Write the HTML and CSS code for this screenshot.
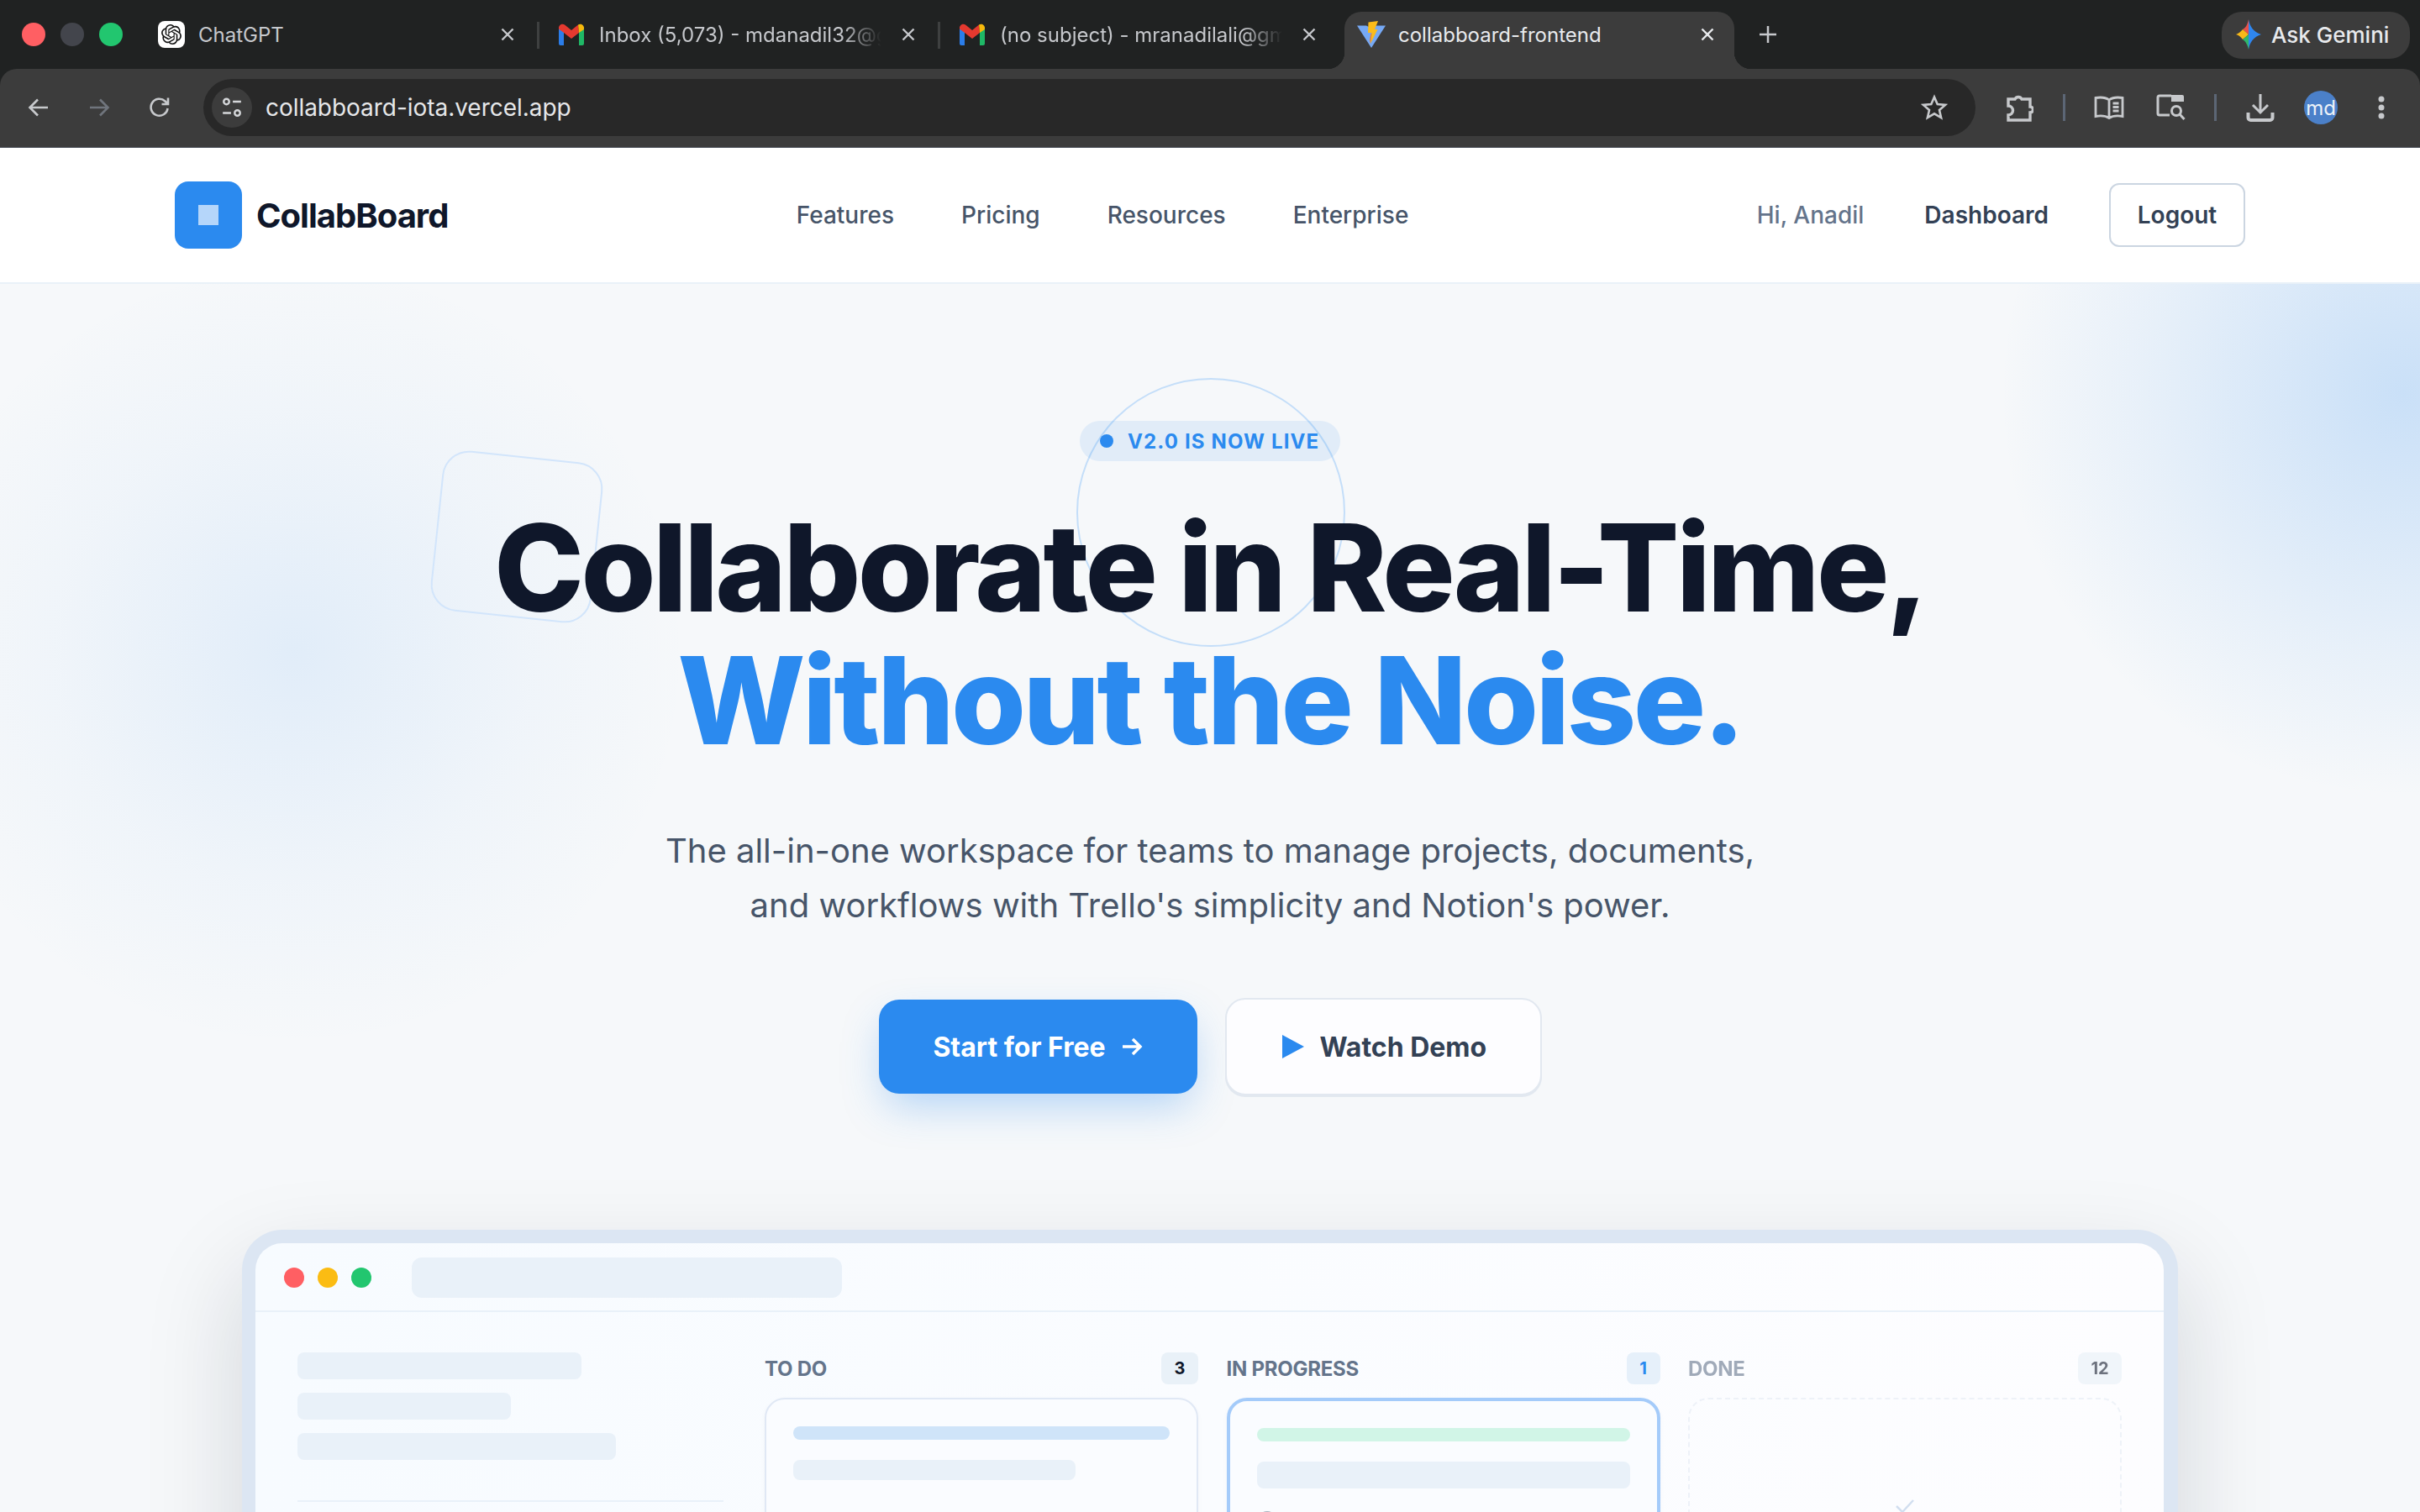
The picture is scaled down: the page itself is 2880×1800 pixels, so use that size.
FILE: index.html
```html
<!DOCTYPE html>
<html lang="en">
<head>
<meta charset="utf-8">
<title>collabboard-frontend</title>
<link rel="stylesheet" href="styles.css">
</head>
<body>
<div class="browser">
  <div class="tabstrip">
    <div class="lights"><i class="light red"></i><i class="light grey"></i><i class="light green"></i></div>
    <div class="tab sep">
      <span class="fav-gpt"><svg viewBox="0 0 24 24" width="24" height="24"><path fill="#111" d="M22.2819 9.8211a5.9847 5.9847 0 0 0-.5157-4.9108 6.0462 6.0462 0 0 0-6.5098-2.9A6.0651 6.0651 0 0 0 4.9807 4.1818a5.9847 5.9847 0 0 0-3.9977 2.9 6.0462 6.0462 0 0 0 .7427 7.0966 5.98 5.98 0 0 0 .511 4.9107 6.051 6.051 0 0 0 6.5146 2.9001A5.9847 5.9847 0 0 0 13.2599 24a6.0557 6.0557 0 0 0 5.7718-4.2058 5.9894 5.9894 0 0 0 3.9977-2.9001 6.0557 6.0557 0 0 0-.7475-7.0729zm-9.022 12.6081a4.4755 4.4755 0 0 1-2.8764-1.0408l.1419-.0804 4.7783-2.7582a.7948.7948 0 0 0 .3927-.6813v-6.7369l2.02 1.1686a.071.071 0 0 1 .038.052v5.5826a4.504 4.504 0 0 1-4.4945 4.4944zm-9.6607-4.1254a4.4708 4.4708 0 0 1-.5346-3.0137l.142.0852 4.783 2.7582a.7712.7712 0 0 0 .7806 0l5.8428-3.3685v2.3324a.0804.0804 0 0 1-.0332.0615L9.74 19.9502a4.4992 4.4992 0 0 1-6.1408-1.6464zM2.3408 7.8956a4.485 4.485 0 0 1 2.3655-1.9728V11.6a.7664.7664 0 0 0 .3879.6765l5.8144 3.3543-2.0201 1.1685a.0757.0757 0 0 1-.071 0l-4.8303-2.7865A4.504 4.504 0 0 1 2.3408 7.872zm16.5963 3.8558L13.1038 8.364 15.1192 7.2a.0757.0757 0 0 1 .071 0l4.8303 2.7913a4.4944 4.4944 0 0 1-.6765 8.1042v-5.6772a.79.79 0 0 0-.407-.667zm2.0107-3.0231l-.142-.0852-4.7735-2.7818a.7759.7759 0 0 0-.7854 0L9.409 9.2297V6.8974a.0662.0662 0 0 1 .0284-.0615l4.8303-2.7866a4.4992 4.4992 0 0 1 6.6802 4.66zM8.3065 12.863l-2.02-1.1638a.0804.0804 0 0 1-.038-.0567V6.0742a4.4992 4.4992 0 0 1 7.3757-3.4537l-.142.0805L8.704 5.459a.7948.7948 0 0 0-.3927.6813zm1.0976-2.3654l2.602-1.4998 2.6069 1.4998v2.9994l-2.5974 1.4997-2.6067-1.4997Z"/></svg></span>
      <span class="tab-title">ChatGPT</span>
      <svg class="close" viewBox="0 0 16 16" width="16" height="16"><path d="M1.5 1.5l13 13M14.5 1.5l-13 13"/></svg>
    </div>
    <div class="tab sep">
      <svg class="fav" viewBox="0 0 30 28" width="30" height="28"><path fill="#2b7de9" d="M0 5h6v22H2a2 2 0 0 1-2-2z"/><path fill="#1fb866" d="M24 5h6v20a2 2 0 0 1-2 2h-4z"/><path fill="#e5392f" d="M0 6.500C0 2 4.500 .5 7 2.500L15 9l8-6.500L24 12l-9 7-9-7-6-4.500z"/><path fill="#f6b80c" d="M23 2.500C25.500 .5 30 2 30 6.500V8l-6 4z"/></svg>
      <span class="tab-title fade">Inbox (5,073) - mdanadil32@gmail.com</span>
      <svg class="close" viewBox="0 0 16 16" width="16" height="16"><path d="M1.5 1.5l13 13M14.5 1.500l-13 13"/></svg>
    </div>
    <div class="tab">
      <svg class="fav" viewBox="0 0 30 28" width="30" height="28"><path fill="#2b7de9" d="M0 5h6v22H2a2 2 0 0 1-2-2z"/><path fill="#1fb866" d="M24 5h6v20a2 2 0 0 1-2 2h-4z"/><path fill="#e5392f" d="M0 6.500C0 2 4.500 .5 7 2.500L15 9l8-6.500L24 12l-9 7-9-7-6-4.500z"/><path fill="#f6b80c" d="M23 2.500C25.500 .5 30 2 30 6.500V8l-6 4z"/></svg>
      <span class="tab-title fade">(no subject) - mranadilali@gmail.com</span>
      <svg class="close" viewBox="0 0 16 16" width="16" height="16"><path d="M1.5 1.5l13 13M14.5 1.500l-13 13"/></svg>
    </div>
    <div class="tab active">
      <svg class="fav-vite" viewBox="0 0 34 32" width="34" height="32"><path fill="#76a9f5" d="M0 5.500h11l6 3 6-3h11L17 32z"/><path fill="#fbbc1a" d="M13.500 1.500L25 0l-4 10h3.500L16 27l1.500-13H13z"/><path fill="#ef7f2a" d="M16.500 14l1 1-1.500 12 -1-4z"/></svg>
      <span class="tab-title bright">collabboard-frontend</span>
      <svg class="close bright-x" viewBox="0 0 16 16" width="16" height="16"><path d="M1.5 1.5l13 13M14.500 1.500l-13 13"/></svg>
    </div>
    <svg class="plus" viewBox="0 0 22 22" width="22" height="22"><path d="M11 1v20M1 11h20"/></svg>
    <div class="gemini">
      <svg viewBox="0 0 30 36" width="30" height="36"><path fill="#2f86ee" d="M15 0c1.500 9 6 15 15 18-9 3-13.500 9-15 18z"/><path fill="#e8514a" d="M15 0c-1 5-3 10-7 12l7 6z"/><path fill="#f7b819" d="M8 12C5.500 15 3 17 0 18c3 1 5.500 2.500 8 6l7-6z"/><path fill="#2fb66a" d="M8 24c3.500 2 6 7 7 12V18z"/></svg>
      <span>Ask Gemini</span>
    </div>
  </div>
  <div class="toolbar">
    <svg class="tool back" viewBox="0 0 28 28" width="28" height="28"><path d="M25 14H4M13 4.500L3.500 14l9.500 9.500"/></svg>
    <svg class="tool forward" viewBox="0 0 28 28" width="28" height="28"><path d="M3 14h21M15 4.500l9.500 9.500-9.500 9.500"/></svg>
    <svg class="tool reload" viewBox="0 0 28 28" width="28" height="28"><path d="M23.500 15a10 10 0 1 1-3-8.500l3 3M24 2.500v7.500h-7.500"/></svg>
    <div class="omnibox">
      <span class="site-info"><svg viewBox="0 0 24 24" width="26" height="26"><circle cx="6" cy="5.500" r="3"/><path d="M13 5.500h9M2 18h9"/><circle cx="18" cy="18" r="3"/></svg></span>
      <span class="url">collabboard-iota.vercel.app</span>
      <svg class="star" viewBox="0 0 32 32" width="32" height="32"><path d="M16 3.500l3.700 8.600 9.300.8-7 6.100 2.100 9.100-8.100-4.800-8.100 4.800 2.100-9.100-7-6.100 9.300-.8z"/></svg>
    </div>
    <svg class="tool puzzle" viewBox="0 0 34 34" width="34" height="34"><path d="M4 7h8a4.500 4.500 0 0 1 8 0h10v9a3.500 3.500 0 0 1 0 7v9H4v-6a5.500 5.500 0 0 0 0-11z"/></svg>
    <i class="tool-sep"></i>
    <svg class="tool book" viewBox="0 0 36 28" width="36" height="28"><path d="M18 5C14 2 8 1.500 2 2.500v22c6-1 12-.5 16 2 4-2.500 10-3 16-2v-22C28 1.500 22 2 18 5zm0 0v21M22.500 9h7M22.500 13.500h7M22.500 18h7"/></svg>
    <svg class="tool tabsearch" viewBox="0 0 36 32" width="36" height="32"><path d="M16 25H4a2 2 0 0 1-2-2V4a2 2 0 0 1 2-2h14"/><path class="solid" d="M18 1h13a2 2 0 0 1 2 2v6H18z"/><circle cx="24" cy="20" r="5.500"/><path d="M28 24l5.500 6"/></svg>
    <i class="tool-sep sep-two"></i>
    <svg class="tool download" viewBox="0 0 34 34" width="34" height="34"><path d="M17 1v21M8 14l9 9 9-9"/><path class="tray" d="M2.500 23v6a3 3 0 0 0 3 3h23a3 3 0 0 0 3-3v-6"/></svg>
    <span class="avatar">md</span>
    <svg class="dots" viewBox="0 0 8 28" width="8" height="28"><circle cx="4" cy="4" r="3.500"/><circle cx="4" cy="14" r="3.500"/><circle cx="4" cy="24" r="3.500"/></svg>
  </div>
</div>

<header class="nav">
  <a class="brand"><span class="brand-mark"><i></i></span><span class="brand-name">CollabBoard</span></a>
  <nav class="nav-links"><a>Features</a><a>Pricing</a><a>Resources</a><a>Enterprise</a></nav>
  <div class="nav-right"><span class="hi">Hi, Anadil</span><a class="dash">Dashboard</a><a class="logout">Logout</a></div>
</header>

<main class="hero">
  <i class="deco-square"></i>
  <i class="deco-circle"></i>
  <div class="pill"><i></i><span>V2.0 IS NOW LIVE</span></div>
  <h1>Collaborate in Real-Time,<br><span>Without the Noise.</span></h1>
  <p class="lead">The all-in-one workspace for teams to manage projects, documents,<br>and workflows with Trello's simplicity and Notion's power.</p>
  <div class="cta">
    <a class="btn primary">Start for Free<svg viewBox="0 0 26 26" width="26" height="26"><path d="M2 13h21M14 4l9 9-9 9"/></svg></a>
    <a class="btn secondary"><svg viewBox="0 0 26 28" width="26" height="28"><path d="M0 0l26 14L0 28z"/></svg>Watch Demo</a>
  </div>
  <section class="frame">
    <div class="window">
      <div class="win-bar">
        <i class="wd r"></i><i class="wd y"></i><i class="wd g"></i>
        <i class="win-url"></i>
      </div>
      <div class="win-body">
        <aside class="side">
          <i class="sk s1"></i><i class="sk s2"></i><i class="sk s3"></i>
          <i class="side-rule"></i>
        </aside>
        <div class="board">
          <div class="col">
            <div class="col-head"><span>TO DO</span><b class="count">3</b></div>
            <div class="card">
              <i class="line blue"></i><i class="block w75"></i>
            </div>
          </div>
          <div class="col">
            <div class="col-head"><span>IN PROGRESS</span><b class="count accent">1</b></div>
            <div class="card focus">
              <i class="line mint"></i><i class="block tall"></i><i class="mini"></i>
            </div>
          </div>
          <div class="col done">
            <div class="col-head"><span>DONE</span><b class="count wide">12</b></div>
            <div class="card dashed">
              <svg viewBox="0 0 24 18" width="24" height="18"><path d="M2 9l7 7L22 2"/></svg>
            </div>
          </div>
        </div>
      </div>
    </div>
  </section>
</main>
</body>
</html>
```
FILE: styles.css
```css
* { box-sizing: border-box; }
html, body { margin: 0; height: 100%; }
body { width: 2880px; height: 1800px; overflow: hidden; font-family: Inter, "Liberation Sans", sans-serif; background: #f6f8fa; color: #0f172a; }
i { display: block; font-style: normal; }
a { display: inline-block; }

/* browser chrome */
.browser { height: 176px; background: #202222; }
.tabstrip { height: 82px; display: flex; align-items: flex-start; position: relative; }
.lights { width: 165px; height: 82px; flex: none; display: flex; gap: 18px; padding: 27px 0 0 26px; }
.light { width: 28px; height: 28px; border-radius: 50%; }
.red { background: #ff5f63; }
.grey { background: #43454c; }
.green { background: #22c66f; }
.tab { width: 477px; height: 68px; margin-top: 14px; flex: none; display: flex; align-items: center; padding: 0 30px 14px 23px; position: relative; font-size: 24px; color: #c6c8cc; }
.sep::after { content: ""; position: absolute; right: 0; top: 12px; width: 3px; height: 32px; background: #3e4040; }
.fav-gpt { width: 32px; height: 32px; flex: none; background: #fff; border-radius: 8px; display: flex; align-items: center; justify-content: center; }
.fav { flex: none; }
.tab-title { flex: 1; margin-left: 16px; white-space: nowrap; overflow: hidden; }
.fade { margin-left: 18px; -webkit-mask-image: linear-gradient(90deg, #000 86%, transparent 100%); mask-image: linear-gradient(90deg, #000 86%, transparent 100%); }
.close { flex: none; margin-left: 24px; fill: none; stroke: #c6c8cc; stroke-width: 2.4; }
.tab.active { width: 464px; margin-left: 4px; background: #3c3c3c; border-radius: 20px 20px 0 0; padding: 0 24px 14px 15px; color: #e8eaed; }
.tab.active::before, .tab.active::after { content: ""; position: absolute; bottom: 0; width: 20px; height: 20px; }
.tab.active::before { left: -20px; background: radial-gradient(circle at 0 0, transparent 20px, #3c3c3c 20.5px); }
.tab.active::after { right: -20px; background: radial-gradient(circle at 100% 0, transparent 20px, #3c3c3c 20.5px); }
.fav-vite { flex: none; }
.bright { color: #e8eaed; margin-left: 15px; }
.bright-x { stroke: #e8eaed; }
.plus { flex: none; margin: 30px 0 0 29px; fill: none; stroke: #c6c8cc; stroke-width: 2.5; }
.gemini { position: absolute; right: 12px; top: 14px; width: 224px; height: 56px; border-radius: 24px; background: #3c3c3c; display: flex; align-items: center; gap: 12px; padding: 0 0 2px 17px; font-size: 26px; font-weight: 500; color: #e8eaed; }
.gemini svg { flex: none; }
.toolbar { height: 94px; background: #3c3c3c; border-radius: 20px 20px 0 0; display: flex; align-items: center; padding: 0 0 1px 32px; border-bottom: 1px solid #4a4f58; }
.tool { flex: none; fill: none; stroke: #c7c9cc; stroke-width: 2.6; }
.forward { stroke: #70757d; margin-left: 44px; }
.reload { margin-left: 44px; }
.omnibox { flex: none; width: 2109px; height: 68px; margin-left: 38px; border-radius: 34px; background: #282828; display: flex; align-items: center; padding: 0 33px 0 10px; }
.site-info { width: 48px; height: 48px; flex: none; border-radius: 50%; background: #3c3c3c; display: flex; align-items: center; justify-content: center; }
.site-info svg { fill: none; stroke: #d5d7da; stroke-width: 2.2; }
.url { flex: 1; margin-left: 16px; padding-bottom: 1px; font-size: 28px; letter-spacing: -.04px; color: #e6e7e9; }
.star { flex: none; fill: none; stroke: #c7c9cc; stroke-width: 2.6; }
.puzzle { margin-left: 35px; stroke-width: 3.400; }
.tool-sep { flex: none; width: 3px; height: 32px; background: #5c6675; margin-left: 35px; }
.book { margin-left: 34px; stroke-width: 2.800; }
.tabsearch { margin-left: 38px; stroke-width: 3; }
.solid { fill: #c7c9cc; stroke: none; }
.sep-two { margin-left: 33px; }
.download { margin-left: 35px; stroke-width: 3; }
.tray { stroke-width: 4; }
.avatar { flex: none; width: 40px; height: 40px; margin-left: 35px; border-radius: 50%; background: #4b80c9; color: #eef2f8; font-size: 24px; display: flex; align-items: center; justify-content: center; }
.dots { flex: none; margin-left: 48px; fill: #c7c9cc; }

/* site nav */
.nav { height: 162px; background: #fff; border-bottom: 2px solid #e9f1f8; display: flex; align-items: center; justify-content: space-between; padding: 0 208px; }
.brand { display: flex; align-items: center; gap: 17px; }
.brand-mark { width: 80px; height: 80px; border-radius: 16px; background: #2b8aef; display: flex; align-items: center; justify-content: center; }
.brand-mark i { width: 24px; height: 24px; background: rgba(255,255,255,.65); }
.brand-name { font-size: 40px; font-weight: 700; letter-spacing: -1px; color: #0f172a; }
.nav-links { display: flex; gap: 80px; font-size: 28px; font-weight: 500; color: #475569; }
.nav-right { display: flex; align-items: center; gap: 72px; font-size: 28px; font-weight: 500; }
.hi { color: #64748b; }
.dash { color: #334155; font-weight: 600; }
.logout { width: 162px; height: 76px; border: 2px solid #cbd5e1; border-radius: 12px; display: flex; align-items: center; justify-content: center; color: #334155; font-weight: 600; }

/* hero */
.hero { position: relative; height: 1462px; overflow: hidden; display: flex; flex-direction: column; align-items: center; padding-top: 163px;
  background:
    radial-gradient(circle 480px at 2860px 130px, rgba(43,138,239,.22), rgba(43,138,239,.07) 65%, transparent 100%),
    radial-gradient(circle 470px at 350px 440px, rgba(43,138,239,.1), rgba(43,138,239,.03) 60%, transparent 100%),
    #f6f8fa; }
.hero > * { flex: none; }
.deco-square { position: absolute; left: 519px; top: 205px; width: 192px; height: 192px; border: 2px solid #d2e5fb; border-radius: 32px; transform: rotate(6deg); }
.deco-circle { position: absolute; left: 1281px; top: 112px; width: 320px; height: 320px; border: 2px solid #c4def9; border-radius: 50%; }
.pill { position: relative; width: 310px; height: 48px; border-radius: 24px; background: rgba(43,138,239,.1); display: flex; align-items: center; gap: 17px; padding-left: 24px; font-size: 24px; font-weight: 650; letter-spacing: 1.150px; color: #2b8aef; white-space: nowrap; }
.pill i { width: 16px; height: 16px; flex: none; border-radius: 50%; background: #2b8aef; }
h1 { position: relative; margin: 48px 0 0; font-size: 144px; line-height: 158px; font-weight: 800; letter-spacing: -3.6px; text-align: center; color: #0f172a; white-space: nowrap; }
h1 span { color: #2b8aef; }
.lead { position: relative; margin: 67px 0 0; font-size: 40px; line-height: 65px; text-align: center; color: #475569; }
.cta { position: relative; margin-top: 78px; display: flex; align-items: flex-start; gap: 33px; }
.btn { border-radius: 24px; display: flex; align-items: center; font-size: 32px; font-weight: 700; }
.primary { width: 379px; height: 112px; margin-top: 2px; justify-content: center; gap: 18px; background: #2b8aef; color: #fff; box-shadow: 0 20px 50px -8px rgba(43,138,239,.35); }
.primary svg { fill: none; stroke: #fff; stroke-width: 3.500; }
.secondary { width: 377px; height: 116px; padding-left: 66px; gap: 19px; background: #fdfdff; border: 2px solid #e2e8f0; box-shadow: 0 2px 0 #e2e8f0; color: #334155; }
.secondary svg { flex: none; fill: #2b8aef; }

/* app preview */
.frame { position: relative; margin-top: 160px; width: 2304px; height: 400px; padding: 16px 17px 0 16px; border-radius: 48px 48px 0 0; background: #dce6f3; box-shadow: 0 50px 110px 10px rgba(15,23,42,.13); }
.window { height: 100%; border-radius: 32px 32px 0 0; background: linear-gradient(90deg, #f7fbff, #fdfdff); overflow: hidden; }
.win-bar { height: 82px; padding: 2px 0 0 34px; border-bottom: 2px solid #e9f1f9; display: flex; align-items: center; gap: 16px; }
.wd { width: 24px; height: 24px; border-radius: 50%; }
.wd.r { background: #ff5f63; }
.wd.y { background: #fbbc13; }
.wd.g { background: #22c66f; }
.win-url { width: 512px; height: 48px; margin-left: 32px; border-radius: 12px; background: #e9f1f9; }
.win-body { display: grid; grid-template-columns: 507px 1fr; gap: 49px; padding: 48px 50px 0; }
.side { display: flex; flex-direction: column; gap: 16px; }
.sk { height: 32px; border-radius: 8px; background: #e9f1f9; }
.s1 { width: 338px; }
.s2 { width: 254px; }
.s3 { width: 379px; }
.side-rule { height: 2px; margin-top: 32px; background: #e9f1f9; }
.board { display: grid; grid-template-columns: repeat(3, 1fr); gap: 33.500px; }
.col-head { height: 38px; margin-bottom: 16px; display: flex; align-items: center; justify-content: space-between; font-size: 24px; font-weight: 650; letter-spacing: -.25px; color: #64748b; }
.count { height: 38px; min-width: 44px; padding: 0 8px; border-radius: 8px; background: #e9f1f8; display: flex; align-items: center; justify-content: center; font-size: 20px; font-weight: 700; letter-spacing: 0; color: #0f172a; }
.count.accent { min-width: 40px; background: #e6f0fa; color: #2b8aef; }
.count.wide { min-width: 52px; }
.card { height: 300px; padding: 32px; border: 2px solid #e0e8f5; border-radius: 24px; background: #fafcff; box-shadow: 0 2px 6px rgba(15,23,42,.03); display: flex; flex-direction: column; }
.line { height: 16px; border-radius: 8px; }
.blue { background: #cfe4f9; }
.mint { background: #d1f5e7; }
.block { height: 24px; margin-top: 24px; border-radius: 8px; background: #e9f1f9; }
.w75 { width: 75%; }
.tall { height: 32px; }
.focus { border: 4px solid #a4cbfa; }
.mini { width: 24px; height: 24px; margin-top: 27px; border-radius: 50%; background: #a8b0bd; }
.done { opacity: .6; }
.dashed { border: 2px dashed #e5ebf4; background: transparent; box-shadow: none; align-items: center; padding-top: 118px; }
.dashed svg { flex: none; fill: none; stroke: #b6cbe6; stroke-width: 2.500; }
```
